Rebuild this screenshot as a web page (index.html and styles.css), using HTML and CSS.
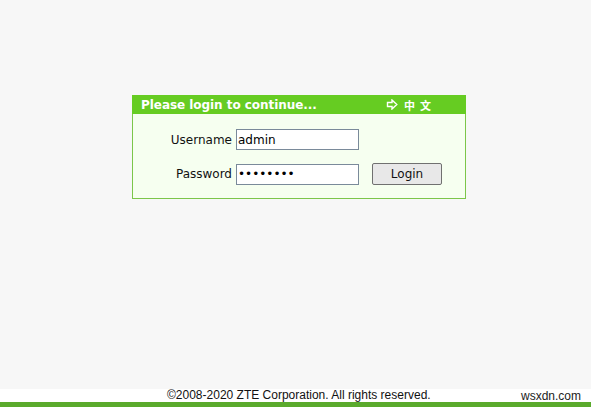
FILE: index.html
```html
<!DOCTYPE html>
<html>
<head>
<meta charset="utf-8">
<link rel="stylesheet" href="styles.css">
</head>
<body>
<div class="page">
  <main class="main">
    <div class="login-box">
      <div class="login-head">
        <span class="head-title">Please login to continue...</span>
        <span class="lang">
          <svg class="arrow" width="12" height="11" viewBox="0 0 12 11"><path d="M1.5 3.5 H6 V1 L10.8 5.5 L6 10 V7.5 H1.5 Z" fill="none" stroke="#fff" stroke-width="1.4" stroke-linejoin="miter"/></svg>
          <span class="cjk">中</span>
          <span class="cjk">文</span>
        </span>
      </div>
      <div class="login-body">
        <div class="row">
          <label class="lbl">Username</label>
          <input class="field" type="text" value="admin">
        </div>
        <div class="row">
          <label class="lbl">Password</label>
          <input class="field" type="password" value="adminpwd">
          <button class="btn">Login</button>
        </div>
      </div>
    </div>
  </main>
  <footer class="footer">
    <div class="foot-text">
      <span class="copy">©2008-2020 ZTE Corporation. All rights reserved.</span>
      <span class="mark">wsxdn.com</span>
    </div>
    <div class="foot-bar"></div>
  </footer>
</div>
</body>
</html>
```
FILE: styles.css
```css
html, body {
  margin: 0;
  padding: 0;
}
body {
  background: #f7f7f7;
  font-family: "DejaVu Sans", Verdana, sans-serif;
}
.page {
  height: 407px;
  display: flex;
  flex-direction: column;
}
.main {
  flex: 1;
  padding: 95px 0 0 132px;
}
.login-box {
  width: 332px;
  border: 1px solid #7cc64a;
  background: #f6fff0;
}
.login-head {
  height: 19px;
  background: #66cc22;
  margin: -1px -1px 0 -1px;
  display: flex;
  align-items: center;
  color: #fff;
  font-weight: bold;
  font-size: 12px;
}
.head-title {
  padding-left: 9px;
  letter-spacing: -0.05px;
}
.lang {
  margin-left: auto;
  margin-right: 35px;
  display: flex;
  align-items: center;
  gap: 5px;
}
.arrow {
  display: block;
  margin-right: 1px;
}
.cjk {
  font-family: "Noto Sans CJK SC", sans-serif;
  font-size: 11px;
  font-weight: bold;
  line-height: 12px;
}
.login-body {
  padding: 15px 0 13px 0;
  display: flex;
  flex-direction: column;
  gap: 13px;
}
.row {
  display: flex;
  align-items: center;
}
.lbl {
  width: 99px;
  text-align: right;
  font-size: 12px;
  color: #111;
  margin-right: 4px;
}
.field {
  box-sizing: border-box;
  width: 123px;
  height: 21px;
  border: 1px solid #7a8a9a;
  padding: 0 1px;
  margin: 0;
  font-family: "DejaVu Sans", sans-serif;
  font-size: 12px;
  color: #000;
  background: #fff;
}
.btn {
  box-sizing: border-box;
  margin-left: 13px;
  width: 70px;
  height: 22px;
  border: 1px solid #707070;
  border-radius: 2px;
  background: #e8e8e8;
  font-family: "DejaVu Sans", sans-serif;
  font-size: 12px;
  color: #111;
  padding: 0;
}
.footer {
  display: flex;
  flex-direction: column;
}
.foot-text {
  height: 13px;
  background: #fff;
  position: relative;
  font-family: "Liberation Sans", Arial, sans-serif;
  font-size: 12px;
  line-height: 13px;
  color: #111;
  padding-left: 167px;
}
.mark {
  position: absolute;
  left: 521px;
  top: 1px;
  color: #222;
}
.foot-bar {
  height: 5px;
  background: #5aaa2c;
}
```
